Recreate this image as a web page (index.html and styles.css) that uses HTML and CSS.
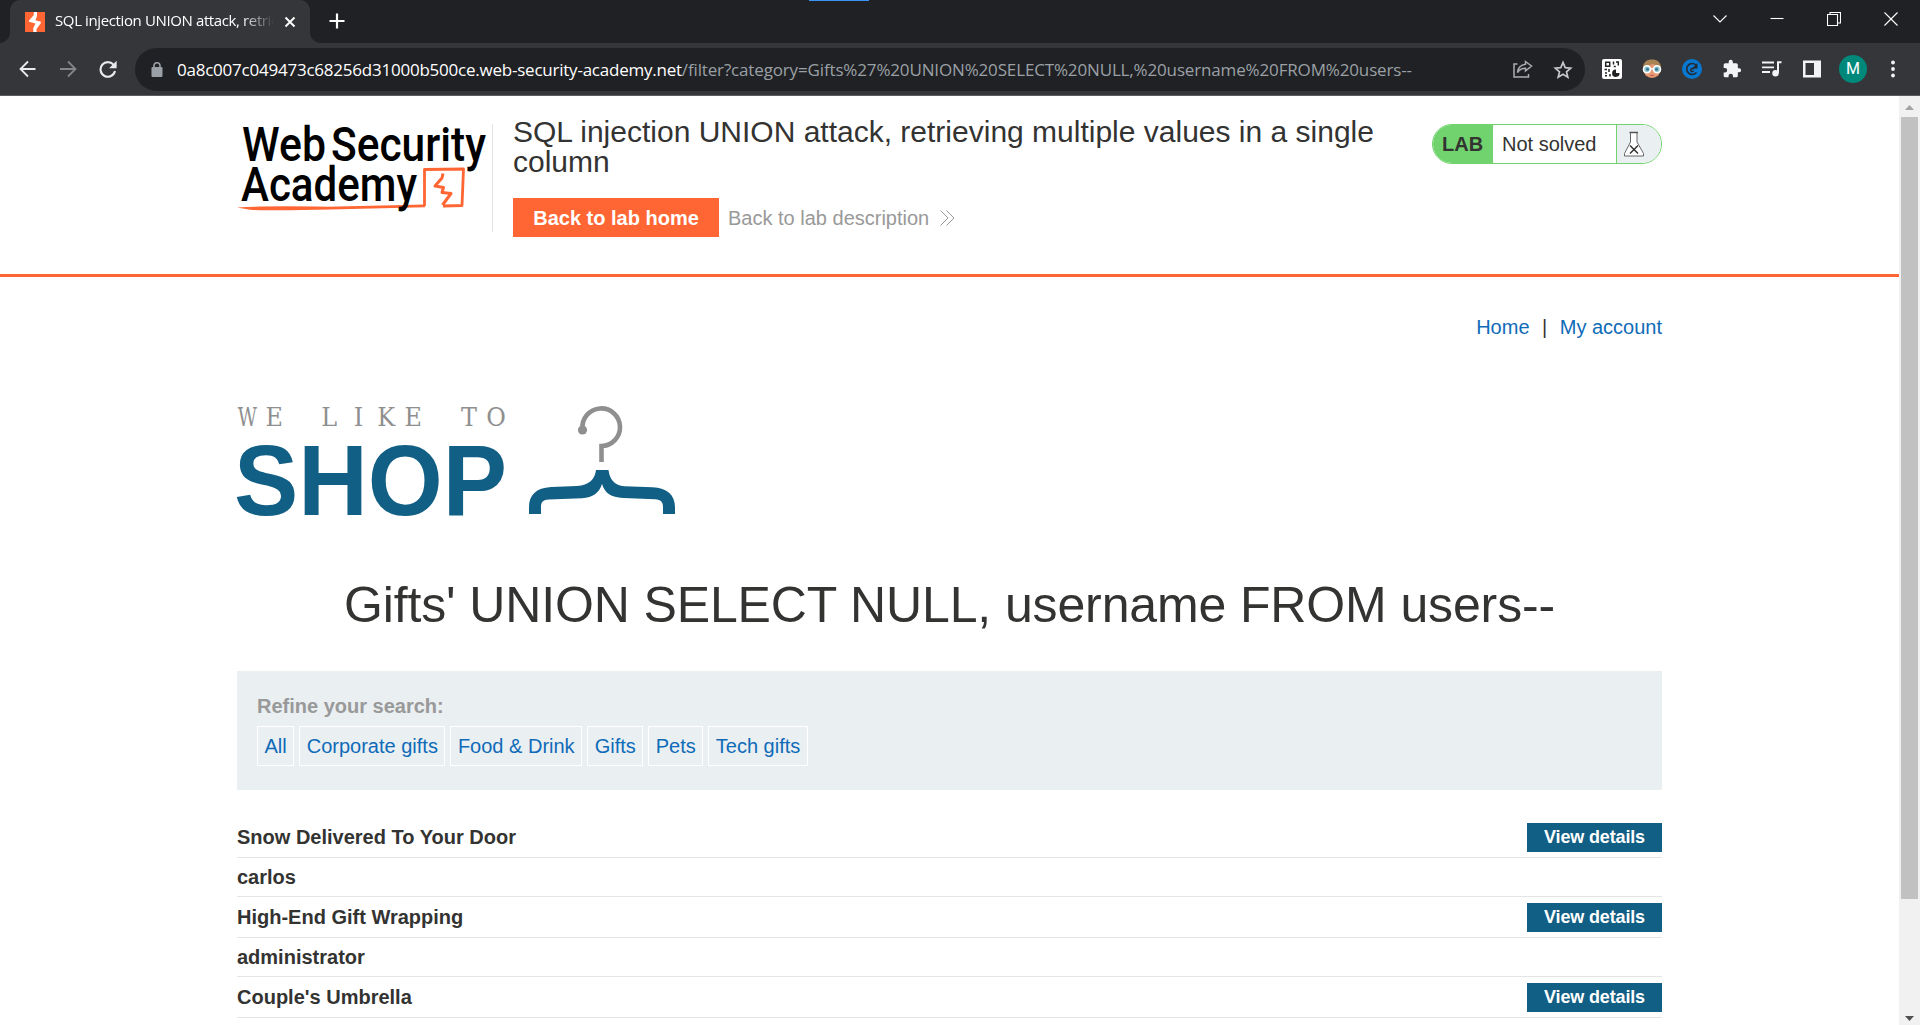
FILE: index.html
```html
<!DOCTYPE html>
<html lang="en">
<head>
<meta charset="utf-8">
<title>SQL injection UNION attack, retrieving multiple values in a single column</title>
<link rel="stylesheet" href="styles.css">
</head>
<body>
<div class="browser">
  <div class="tabstrip">
    <span class="activity"></span>
    <div class="tab">
      <svg class="favicon" width="20" height="20" viewBox="0 0 20 20"><rect width="20" height="20" fill="#ff6633"/><path d="M8.800 0h3.200v4L10.500 8.300l5.300 1.500v1.400L11.500 17v3H8.300v-4l2.200-4.500L4 9.800V8.500L8.800 3z" fill="#fff"/></svg>
      <span class="tab-title">SQL injection UNION attack, retrie</span>
      <svg class="tab-close" width="12" height="12" viewBox="0 0 12 12"><path d="M1.500 1.500l9 9M10.500 1.500l-9 9" stroke="#fff" stroke-width="1.900"/></svg>
    </div>
    <svg class="newtab" width="16" height="16" viewBox="0 0 16 16"><path d="M8 .5v15M.5 8h15" stroke="#fff" stroke-width="2.200"/></svg>
    <div class="window-controls">
      <svg width="14" height="14" viewBox="0 0 14 14"><path d="M.5 3.500L7 10l6.500-6.500" class="wc"/></svg>
      <svg width="14" height="14" viewBox="0 0 14 14"><path d="M.5 6.500h13" class="wc"/></svg>
      <svg width="14" height="14" viewBox="0 0 14 14"><path d="M.5 2.500h10v11H.5zM3 2V.5h10.500v10.500H11" class="wc"/></svg>
      <svg width="14" height="14" viewBox="0 0 14 14"><path d="M.5 .5l13 13M13.500 .5l-13 13" class="wc"/></svg>
    </div>
  </div>
  <div class="toolbar">
    <svg class="nav back" width="18" height="18" viewBox="0 0 18 18"><path d="M16.500 9H2M9 1.500L1.500 9 9 16.500" fill="none" stroke="#e8eaed" stroke-width="1.800"/></svg>
    <svg class="nav" width="18" height="18" viewBox="0 0 18 18"><path d="M1 9h15M9 1.500L16.500 9 9 16.500" fill="none" stroke="#85868a" stroke-width="1.800"/></svg>
    <svg class="nav" width="18" height="18" viewBox="0 0 18 18"><path d="M15 5.500A7.300 7.300 0 1 0 16 11" fill="none" stroke="#e8eaed" stroke-width="2.100"/><path d="M17.600 .8v7.500h-7.500z" fill="#e8eaed"/></svg>
    <div class="omnibox">
      <svg class="lock" width="12" height="15" viewBox="0 0 12 15"><rect x=".5" y="5" width="11" height="10" rx="1.200" fill="#9aa0a6"/><path d="M3 6V3.800a3 3 0 0 1 6 0V6" fill="none" stroke="#9aa0a6" stroke-width="1.600"/></svg>
      <span class="url"><span class="host">0a8c007c049473c68256d31000b500ce.web-security-academy.net</span><span class="path">/filter?category=Gifts%27%20UNION%20SELECT%20NULL,%20username%20FROM%20users--</span></span>
      <svg class="share" width="20" height="18" viewBox="0 0 20 18"><path d="M4.500 4H1v13h14.500v-3" fill="none" stroke="#aaadb1" stroke-width="1.500"/><path d="M12.500 1.500L18.500 6l-6 5V8.300C8.500 8.300 6 10 4.500 12.500 5 8 8 4.800 12.500 4.300z" fill="none" stroke="#aaadb1" stroke-width="1.500"/></svg>
      <svg class="star" width="20" height="19" viewBox="0 0 20 19"><path d="M10 2.400l2.200 5.200 5.500.5-4.200 3.700 1.300 5.400-4.800-2.900-4.800 2.900 1.300-5.400L2.300 8.100l5.500-.5z" fill="none" stroke="#c4c7cb" stroke-width="1.700"/></svg>
    </div>
    <div class="extensions">
      <svg width="20" height="20" viewBox="0 0 20 20"><rect width="20" height="20" rx="2" fill="#fff"/><path d="M3.700 3.200h4v4h-4zM11.500 2.500v3M13.800 7.500h-2M14 3h2.300v3.500M2.500 10.500h2.500M7 10v3M4 13v2M3 16.700h2M8 15v2.500" fill="none" stroke="#222" stroke-width="1.500"/><path d="M14 10.500v3.500h3.500a3.700 3.700 0 1 1-3.500-3.500z" fill="#222"/></svg>
      <svg width="20" height="20" viewBox="0 0 20 20"><circle cx="10" cy="10" r="9" fill="#e59a74"/><path d="M1 9C1 3 5 .5 10 .5S19 3 19 9L16 7 11 5 4 7z" fill="#a88455"/><g fill="#8cc4d2" stroke="#fff" stroke-width="1.600"><circle cx="5" cy="10.300" r="3.500"/><circle cx="15" cy="10.300" r="3.500"/></g><path d="M8.300 9.800h3.400" stroke="#fff" stroke-width="1.400"/><circle cx="5.500" cy="10.300" r="1.500" fill="#3d7a8f"/><circle cx="14.500" cy="10.300" r="1.500" fill="#3d7a8f"/><path d="M8.500 16.500h3" stroke="#c24d43"/></svg>
      <svg width="20" height="20" viewBox="0 0 20 20"><circle cx="10" cy="10" r="10" fill="#0878d1"/><path d="M14 6A5.500 5.500 0 1 0 14.500 13.500" fill="none" stroke="#252a32" stroke-width="1.600"/><path d="M15.500 4v5.500H10z" fill="#252a32"/><path d="M12.500 9.500H10a1.500 1.500 0 1 0 1.500 2.300" fill="none" stroke="#252a32" stroke-width="1.500"/></svg>
      <svg width="20" height="20" viewBox="0 0 24 24"><path d="M20.500 11H19V7a2 2 0 0 0-2-2h-4V3.500a2.500 2.500 0 0 0-5 0V5H4a2 2 0 0 0-2 2v3.800h1.500a2.700 2.700 0 0 1 0 5.400H2V20a2 2 0 0 0 2 2h3.800v-1.500a2.700 2.700 0 0 1 5.400 0V22H17a2 2 0 0 0 2-2v-4h1.500a2.500 2.500 0 0 0 0-5z" fill="#f1f3f4"/></svg>
      <svg width="20" height="20" viewBox="0 0 20 20"><path d="M0 3.500h12M0 8.300h12M0 13h8" stroke="#f1f3f4" stroke-width="1.800"/><path d="M19.500 3.200H16V14" fill="none" stroke="#f1f3f4" stroke-width="2"/><circle cx="13.500" cy="14.300" r="3.200" fill="#f1f3f4"/></svg>
      <svg width="20" height="20" viewBox="0 0 20 20"><path d="M1 1.500h18v17H1zM3.500 4v12H12V4z" fill="#f1f3f4" fill-rule="evenodd"/></svg>
      <span class="avatar">M</span>
      <svg class="dots" width="6" height="18" viewBox="0 0 6 18"><g fill="#f1f3f4"><circle cx="3" cy="2.500" r="1.900"/><circle cx="3" cy="9" r="1.900"/><circle cx="3" cy="15.500" r="1.900"/></g></svg>
    </div>
  </div>
</div>
<div class="viewport">
  <div class="page">
    <header class="lab-header">
      <div class="container header-row">
        <svg class="wsa-logo" width="255" height="108" viewBox="0 0 255 108">
          <g font-family="Roboto, sans-serif" font-weight="500" font-size="47.500" fill="#000"><text x="5" y="36.500" textLength="84" lengthAdjust="spacingAndGlyphs">Web</text><text x="94" y="36.500" textLength="155" lengthAdjust="spacingAndGlyphs">Security</text></g>
          <g fill="none" stroke="#ff6633" stroke-width="2.800" stroke-linejoin="round"><path d="M187.500 82V45.500l39-.5-1.500 36.500-19 .5"/><path d="M206 49.500l-1 4.500-7 8 8.500 1.500-1.500 5 9 1-8.500 11.500" stroke-width="3"/></g>
          <path d="M0 83.500q30-2 90-.8l98-2.200v2.700l-95 2.300q-55 1.500-80 .2z" fill="#ff6633"/>
          <text x="4" y="77" textLength="176" lengthAdjust="spacingAndGlyphs" font-family="Roboto, sans-serif" font-weight="500" font-size="47.500" fill="#000">Academy</text>
        </svg>
        <div class="title-box">
          <h2 class="lab-title">SQL injection UNION attack, retrieving multiple values in a single<br>column</h2>
          <div class="lab-links">
            <a class="lab-home">Back to lab home</a>
            <a class="lab-desc">Back to lab description <svg width="15" height="16" viewBox="0 0 15 16"><path d="M.5 .5L8 8 .5 15.500M6.500 .5L14 8l-7.500 7.500" fill="none" stroke="#999" stroke-width="1"/></svg></a>
          </div>
        </div>
        <div class="status">
          <span class="status-tag">LAB</span>
          <span class="status-text">Not solved</span>
          <span class="status-icon"><svg width="22" height="26" viewBox="0 0 22 26"><path d="M7.500 1.500V11L1.500 22.500v2.500h19v-2.500L14 11V1.500" fill="#fff" stroke="#666" stroke-width="1"/><path d="M6.500 1.500h8.500" stroke="#555" stroke-width="1.400"/><path d="M7 14.500l8 8M15 14.500l-8 8" stroke="#333" stroke-width="1.500"/></svg></span>
        </div>
      </div>
    </header>
    <main class="container">
      <nav class="top-links"><a>Home</a><span>|</span><a>My account</a></nav>
      <svg class="shop-logo" width="440" height="114" viewBox="0 0 440 114">
        <g font-family="DejaVu Serif, serif" font-size="26" fill="#8f8f8f"><text transform="translate(.8 0) scale(.72 1)" x="0" y="22">W</text><g transform="scale(.92 1)"><text x="31" y="22">E</text><text x="91.500 127 152.500 182" y="22">LIKE</text><text x="243.500 271" y="22">TO</text></g></g>
        <text x="-3" y="110.500" textLength="273" lengthAdjust="spacingAndGlyphs" font-family="Liberation Sans, sans-serif" font-weight="700" font-size="101" fill="#125f85">SHOP</text>
        <path d="M345.500 25A18.800 18.800 0 1 1 364.500 42V58" fill="none" stroke="#8f8f8f" stroke-width="4.600"/><circle cx="345.500" cy="26" r="4.600" fill="#8f8f8f"/>
        <path d="M359 66h12.500c1 9 6 15.500 16 16.200l28 1c15 .8 22.500 8 22.500 20V110h-12v-7c0-5-2-7.300-8-7.800l-32-1.200c-12-.8-18-4.500-21-14-3 9-9 13.500-20 14.200L312 95.500c-6 .3-8 2.500-8 7.500v7h-12v-7c0-12 7-19 22-20l26-1c12-.5 18-7 19-16z" fill="#125f85"/>
      </svg>
      <h1>Gifts' UNION SELECT NULL, username FROM users--</h1>
      <section class="filters">
        <label>Refine your search:</label>
        <div class="tags"><a>All</a><a>Corporate gifts</a><a>Food &amp; Drink</a><a>Gifts</a><a>Pets</a><a>Tech gifts</a></div>
      </section>
      <div class="results">
        <div class="row product"><span>Snow Delivered To Your Door</span><a>View details</a></div>
        <div class="row"><span>carlos</span></div>
        <div class="row product"><span>High-End Gift Wrapping</span><a>View details</a></div>
        <div class="row"><span>administrator</span></div>
        <div class="row product"><span>Couple's Umbrella</span><a>View details</a></div>
      </div>
    </main>
  </div>
  <div class="scrollbar">
    <svg width="9" height="5" viewBox="0 0 9 5"><path d="M0 5L4.500 0 9 5z" fill="#a3a3a3"/></svg>
    <div class="thumb"></div>
    <svg class="down" width="9" height="5" viewBox="0 0 9 5"><path d="M0 0h9L4.500 5z" fill="#505050"/></svg>
  </div>
</div>
</body>
</html>
```
FILE: styles.css
```css
* { box-sizing: border-box; }
body { margin: 0; width: 1920px; height: 1025px; overflow: hidden; display: flex; flex-direction: column; background: #fff; color: #333332; font: 20px/30px "Liberation Sans", Arial, sans-serif; }
svg { display: block; flex: none; }

.browser { height: 96px; flex: none; background: #35363a; border-bottom: 1px solid #5b5c60; font-family: "Open Sans", "Noto Sans", sans-serif; color: #fff; }
.tabstrip { position: relative; height: 43px; background: #202124; display: flex; align-items: center; padding-left: 10px; }
.activity { position: absolute; left: 809px; top: 0; width: 60px; height: 1px; background: #3b94f5; }
.tab { position: relative; width: 300px; height: 43px; background: #35363a; border-radius: 10px 10px 0 0; display: flex; align-items: center; padding-left: 15px; }
.tab::before, .tab::after { content: ""; position: absolute; bottom: 0; width: 10px; height: 10px; }
.tab::before { left: -10px; background: radial-gradient(circle at 0 0, #202124 9.5px, #35363a 10px); }
.tab::after { right: -10px; background: radial-gradient(circle at 100% 0, #202124 9.5px, #35363a 10px); }
.tab-title { width: 219px; margin: -3px 0 0 10px; overflow: hidden; white-space: nowrap; font-size: 15px; line-height: 24px; letter-spacing: -0.38px; -webkit-mask-image: linear-gradient(90deg, #000 85%, transparent 100%); }
.tab-close { margin-left: 10px; }
.newtab { margin-left: 19px; margin-top: -1px; }
.window-controls { margin-left: auto; margin-right: 22px; margin-top: -6px; display: flex; gap: 43px; }
.wc { fill: none; stroke: #fff; stroke-width: 1.1; }
.toolbar { height: 52px; display: flex; align-items: center; padding-left: 19px; }
.nav { margin-right: 22px; }
.omnibox { width: 1450px; height: 43px; margin-left: -4px; border-radius: 22px; background: #202124; display: flex; align-items: center; padding-left: 16px; }
.url { width: 1236px; margin: 2px 0 0 14px; white-space: nowrap; font-size: 17px; line-height: 26px; }
.host { letter-spacing: -0.23px; }
.path { color: #9aa0a6; letter-spacing: -0.15px; }
.share { margin-left: 100px; }
.star { margin-left: 20px; }
.extensions { display: flex; align-items: center; gap: 20px; margin-left: 17px; }
.avatar { width: 28px; height: 28px; border-radius: 50%; background: #00897b; font: 16px/28px Roboto, sans-serif; text-align: center; margin-left: -3px; }
.dots { margin-left: 3px; }

.viewport { flex: 1; display: flex; min-height: 0; }
.page { width: 1899px; overflow: hidden; }
.container { width: 1425px; margin: 0 auto; }
.lab-header { height: 181px; border-bottom: 3px solid #ff6633; }
.header-row { display: flex; align-items: flex-start; padding-top: 28px; }
.title-box { height: 108px; margin-right: auto; border-left: 1px solid #e5e5e5; padding-left: 20px; }
.lab-title { margin: -7px 0 0; font-size: 30px; line-height: 30px; font-weight: 400; }
.lab-links { display: flex; align-items: center; margin-top: 21px; }
.lab-home { width: 206px; height: 39px; background: #ff6633; color: #fff; font-weight: 700; line-height: 40px; text-align: center; }
.lab-desc { display: flex; align-items: center; gap: 11px; margin-left: 9px; color: #999; }
.status { width: 230px; height: 40px; display: flex; border: 1px solid #71d36e; border-radius: 20px; overflow: hidden; line-height: 38px; }
.status-tag { width: 60px; padding-left: 9px; background: #71d36e; font-weight: 700; }
.status-text { width: 124px; padding-left: 9px; border-right: 1px solid #71d36e; }
.status-icon { flex: 1; background: #eaeff2; padding: 6px 0 0 6px; }

.top-links { display: flex; justify-content: flex-end; gap: 12.5px; padding-top: 35px; color: #333332; }
.top-links a, .tags a { color: #0f6bb8; }
.shop-logo { margin-top: 62px; overflow: visible; }
h1 { margin: 57px 0 0; text-align: center; font-size: 50px; line-height: 60px; font-weight: 400; letter-spacing: -0.13px; }
.filters { height: 119px; margin-top: 36px; padding: 20px; background: #eaeff2; }
.filters label { display: block; color: #999; font-weight: 700; }
.tags { display: flex; gap: 5px; margin-top: 5px; }
.tags a { height: 40px; border: 1px solid #fff; padding: 0 6.5px; line-height: 38px; white-space: nowrap; }
.results { margin-top: 27px; }
.row { height: 39px; border-bottom: 1px solid #e5e5e5; display: flex; justify-content: space-between; align-items: center; font-weight: 700; }
.product { height: 41px; }
.row a { width: 135px; height: 29px; margin-top: 1px; background: #125f85; color: #fff; font-size: 18px; line-height: 29px; text-align: center; letter-spacing: -0.15px; }

.scrollbar { width: 21px; background: #f1f1f1; display: flex; flex-direction: column; align-items: center; padding: 9px 0 4px; }
.thumb { width: 17px; height: 782px; margin-top: 7px; background: #c1c1c1; }
.down { margin-top: auto; }
```
